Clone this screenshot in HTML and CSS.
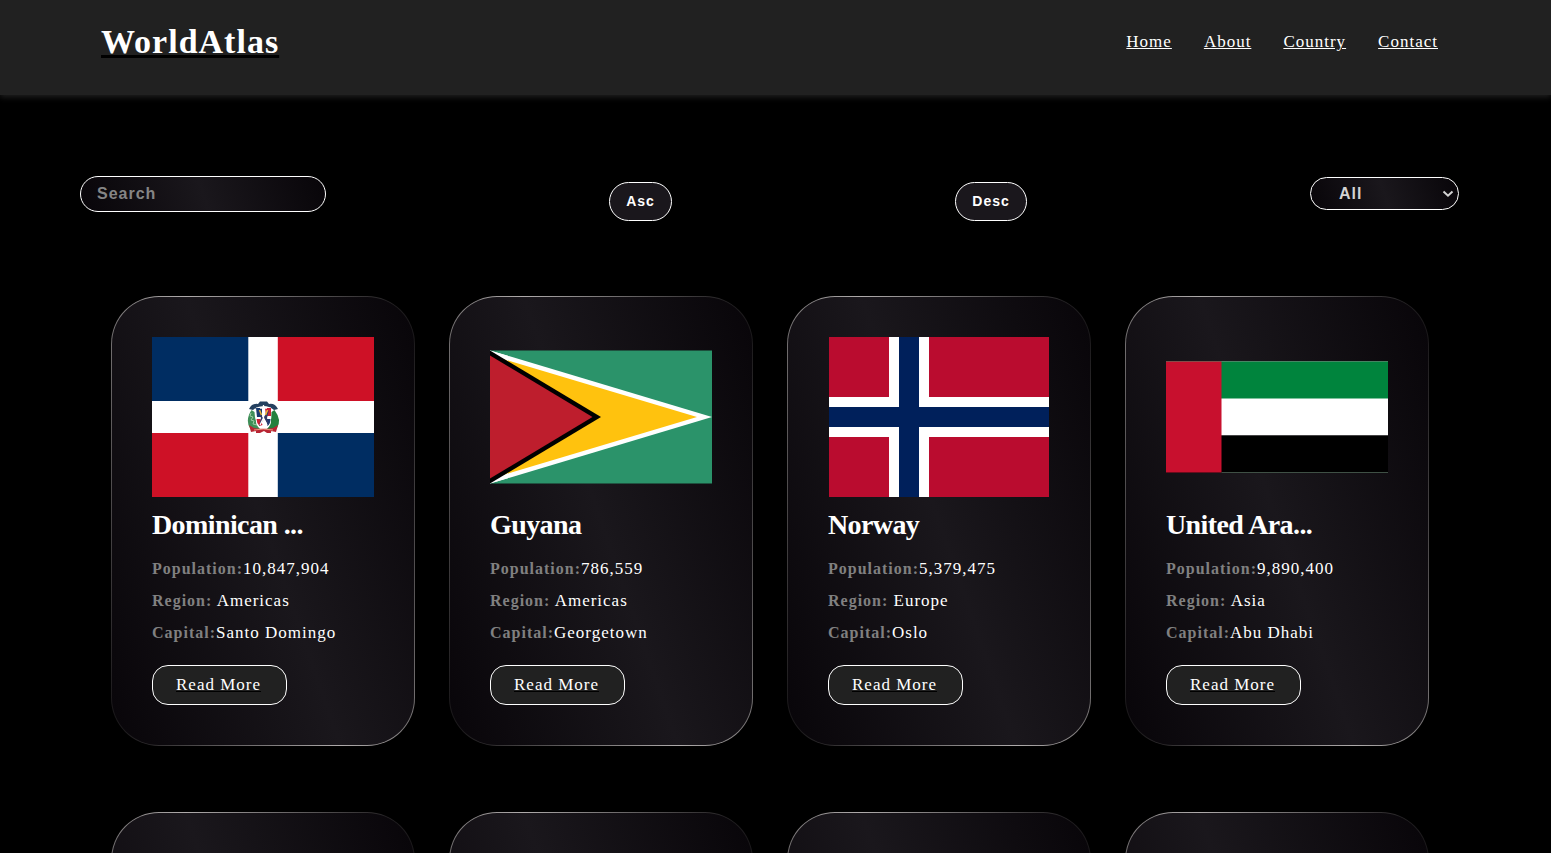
FILE: index.html
```html
<!DOCTYPE html>
<html lang="en">
<head>
<meta charset="utf-8">
<title>WorldAtlas</title>
<link rel="stylesheet" href="styles.css">
</head>
<body>
<header class="header">
  <a class="logo" href="#"><h1>WorldAtlas</h1></a>
  <nav class="nav"><a href="#">Home</a><a href="#">About</a><a href="#">Country</a><a href="#">Contact</a></nav>
</header>
<section class="filters">
  <input class="search" type="text" placeholder="Search">
  <button class="sort asc">Asc</button>
  <button class="sort desc">Desc</button>
  <div class="region"><span>All</span><svg width="12" height="8" viewBox="0 0 12 8"><path d="M1.5 1.5 6 5.7 10.5 1.5" fill="none" stroke="#d3d3d3" stroke-width="2"/></svg></div>
</section>
<main class="grid">
  <article class="card">
    <svg class="flag" viewBox="0 0 222 160">
      <path fill="#fff" d="M0 0h222v160H0z"/>
      <path fill="#002d62" d="M0 0h96.3v64H0zM125.8 96H222v64h-96.2z"/>
      <path fill="#ce1126" d="M125.8 0H222v64h-96.2zM0 96h96.3v64H0z"/>
      <path d="M97 72Q100 66 106 67L108 64.500H115L117 67Q123 66 126 72L122 73Q112 65 101 73Z" fill="#24405f"/>
      <path d="M99.500 73Q93 83 98 91 103 96 110 94 103 88 102.500 75Z" fill="#3f8f58"/>
      <path d="M122.500 73Q130 83 125 91 120 96 113 94 120 88 119.500 75Z" fill="#24803d"/>
      <path d="M99 76l-1 3 3 1-2 3 3 1-1 3 4 1" fill="none" stroke="#9bcaa2"/>
      <path d="M104 70.500h15v14q0 6-7.500 8-7.500-2-7.500-8z" fill="#fff"/>
      <path d="M104 71h6v9h-5zM113.500 82h5q0 5-3 7z" fill="#183a70"/>
      <path d="M113 71h6v8h-5zM104.500 82h4l2 6-3 1q-3-3-3-7z" fill="#cf2036"/>
      <path d="M106 73l5 8 6-8-2 8 2 7-5-6-5 7 2-8z" fill="#343c68"/>
      <path d="M107.500 73l2 5M115.500 73l-2 5" stroke="#e7b839" stroke-width="1.500"/>
      <path d="M111.500 68v15M108 71h7M108 88l3.500-7 3.500 7" fill="none" stroke="#fff" stroke-width="1.300"/>
      <path d="M97 88l5 3q9 2 19 0l5-3-2 7-5-1v2h-4l-3-2-4 2h-4v-2l-5 1z" fill="#b82533"/>
      <path d="M102 93q9-2 19 0" fill="none" stroke="#ec947c"/>
    </svg>
    <h2>Dominican ...</h2>
    <p><b>Population:</b>10,847,904</p><p><b>Region:</b> Americas</p><p><b>Capital:</b>Santo Domingo</p>
    <a class="more" href="#">Read More</a>
  </article>
  <article class="card">
    <svg class="flag" viewBox="0 0 222 160">
      <path fill="#2b936a" d="M0 13.400h222v133.200H0z"/>
      <path fill="#fff" d="M0 13.400 222 80 0 146.600z"/>
      <path fill="#ffc20e" d="M0 18 207 80 0 142z"/>
      <path fill="#fff" d="M0 13.400 18 24 18 18.800zM0 146.600 18 136 18 141.200z"/>
      <path fill="#000" d="M0 13.400 111 80 0 146.600z"/>
      <path fill="#be1e2d" d="M0 18.500 102.500 80 0 141.500z"/>
    </svg>
    <h2>Guyana</h2>
    <p><b>Population:</b>786,559</p><p><b>Region:</b> Americas</p><p><b>Capital:</b>Georgetown</p>
    <a class="more" href="#">Read More</a>
  </article>
  <article class="card">
    <svg class="flag" viewBox="0 0 222 160">
      <path fill="#ba0c2f" d="M1 0h220v160H1z"/>
      <path fill="#fff" d="M61 0h40v160H61zM1 60h220v40H1z"/>
      <path fill="#00205b" d="M71 0h20v160H71zM1 70h220v20H1z"/>
    </svg>
    <h2>Norway</h2>
    <p><b>Population:</b>5,379,475</p><p><b>Region:</b> Europe</p><p><b>Capital:</b>Oslo</p>
    <a class="more" href="#">Read More</a>
  </article>
  <article class="card">
    <svg class="flag" viewBox="0 0 222 160">
      <path fill="#fff" d="M0 24.500h222V98.500H0z"/>
      <path fill="#00843d" d="M0 24.500h222v37H0z"/>
      <path fill="#000" d="M0 98.500h222v37H0z"/>
      <path fill="#c8102e" d="M0 24.500h55.500v111H0z"/>
      <path stroke="#3f5045" d="M55.500 135.500H222"/>
    </svg>
    <h2>United Ara...</h2>
    <p><b>Population:</b>9,890,400</p><p><b>Region:</b> Asia</p><p><b>Capital:</b>Abu Dhabi</p>
    <a class="more" href="#">Read More</a>
  </article>
  <article class="card"></article>
  <article class="card"></article>
  <article class="card"></article>
  <article class="card"></article>
</main>
</body>
</html>
```
FILE: styles.css
```css
* { box-sizing: border-box; margin: 0; padding: 0; }
html, body { height: 100%; overflow: hidden; }
body { display: flex; flex-direction: column; background: #000; color: #fff; font: 17px "Liberation Serif", "Times New Roman", serif; letter-spacing: 1px; }
.header { display: flex; flex: none; justify-content: space-between; height: 95px; padding: 22px 113px 0 101px; background: #212121; box-shadow: 0 2px 6px #212121; }
.logo { color: #000; height: 40px; text-underline-offset: 2px; text-decoration-thickness: 3px; text-decoration-skip-ink: none; }
.logo h1 { color: #fff; font-size: 34px; line-height: 40px; }
.nav { display: flex; gap: 32px; height: 40px; align-items: center; }
.nav a { color: #fff; }
.filters { display: flex; flex: none; align-items: flex-start; height: 201px; padding: 81px 92px 0 80px; }
.search, .region { border: 1px solid #fff; border-radius: 18px; background: linear-gradient(71deg, #080509, #1a171c, #080509); font: bold 16px "Liberation Sans", Arial, sans-serif; letter-spacing: 1px; }
.search { width: 246px; height: 36px; padding: 0 16px; color: #fff; }
.search::placeholder { color: #858585; opacity: 1; }
.sort { height: 39px; margin-top: 6px; padding: 0 0 2px; border: 1px solid #fff; border-radius: 20px; background: #1a171c; color: #fff; font: bold 14px "Liberation Sans", Arial, sans-serif; letter-spacing: 1px; }
.asc { width: 63px; margin-left: 283px; }
.desc { width: 72px; margin-left: 283px; }
.region { display: flex; align-items: center; justify-content: space-between; width: 149px; height: 33px; margin: 1px 0 0 auto; padding: 0 4px 0 28px; color: #d3d3d3; }
.grid { display: grid; flex: 1; min-height: 0; overflow: hidden; grid-template-columns: repeat(4, 304px); grid-auto-rows: 450px; gap: 66px 34px; padding-left: 111px; }
.card { display: flex; flex-direction: column; align-items: flex-start; padding: 40px; border: 1px solid transparent; border-radius: 48px; background: linear-gradient(71deg, #080509, #1a171c, #080509) padding-box, linear-gradient(71deg, #121012, #afabab, #121012) border-box; }
.flag { display: block; width: 222px; height: 160px; }
.card h2 { margin: 11px 0 12px; font-size: 28px; line-height: 34px; letter-spacing: -.6px; }
.card p { height: 32px; line-height: 30px; white-space: nowrap; }
.card b { color: #808080; font-size: 16px; }
.more { width: 135px; height: 40px; border: 1px solid #fff; border-radius: 16px; background: #212121; line-height: 38px; padding-left: 23px; color: #fff; text-decoration: underline #000; margin-top: 15px; }
```
